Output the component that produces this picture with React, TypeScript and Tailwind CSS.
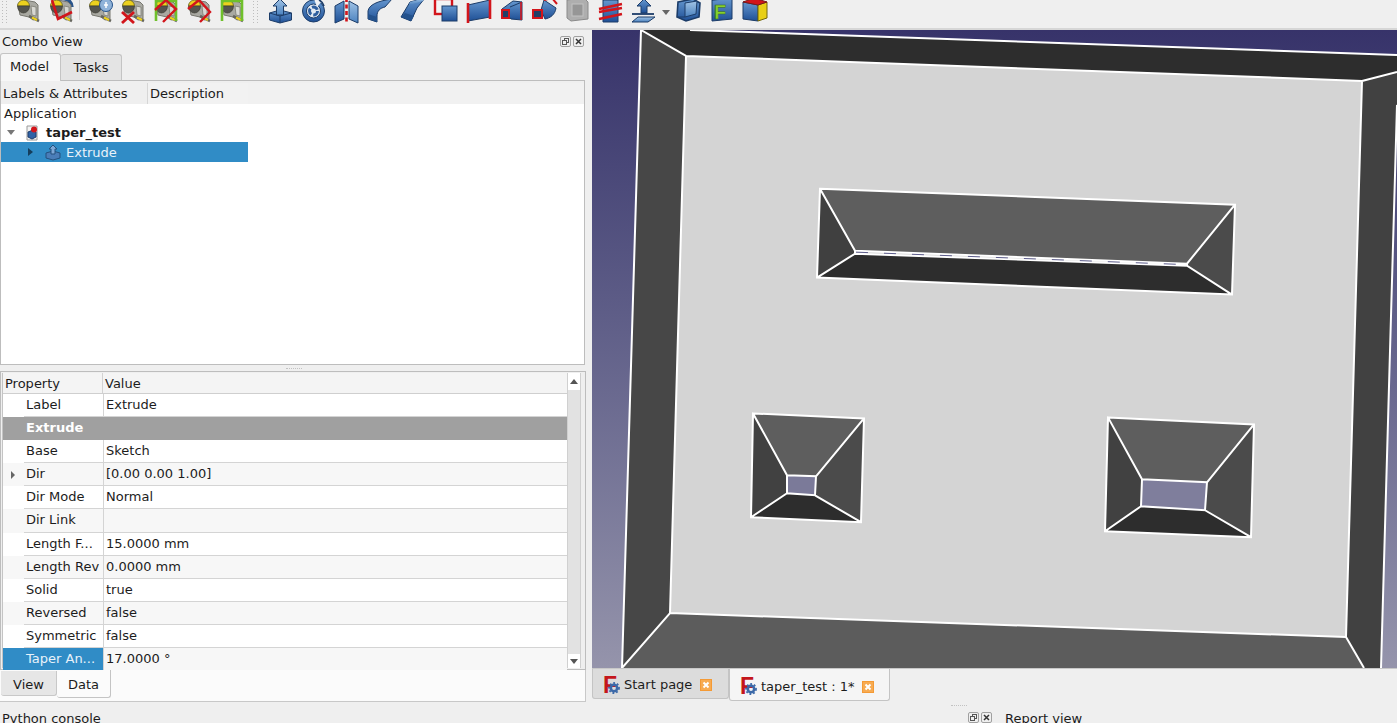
import React from "react";

const O = "#1c3c68";
const B = "url(#gb)";
const L = "url(#gl)";
const D = "#24528c";

function Ico({ children, w = 33 }: { children: React.ReactNode; w?: number }) {
  return (
    <svg width={w} height={32} viewBox={`0 0 ${w} 32`} className="shrink-0 block">
      {children}
    </svg>
  );
}

function Caliper() {
  return (
    <g>
      <path d="M7 12 L13 8 L24 10 L27 13 L27 27 L22 28 L18 25 L9 23 Z" fill="#a9a9a2" stroke="#77776f" strokeWidth="1" />
      <path d="M20 14 L25 15 L25 24 L21 23 Z" fill="#d8d8d2" stroke="#7c7c74" strokeWidth="0.8" />
      <path d="M6.5 14 A6 6 0 0 1 18.5 14 Z" fill="#ecd01e" stroke="#6a6420" strokeWidth="0.8" />
      <path d="M6.5 14 H18.5 A6 7 0 0 1 6.5 14 Z" fill="#54544e" stroke="#38382f" strokeWidth="0.6" />
      <path d="M18 24 L28 29" stroke="#66665e" strokeWidth="2.6" />
      <path d="M21 25.5 L26 28" stroke="#ecd01e" strokeWidth="2" />
    </g>
  );
}

const red = "#d2151b";
const green = "#6fc02b";

function GreenBracket() {
  return <path d="M7 29 V9 H27 V29" fill="none" stroke={green} strokeWidth="2.6" />;
}

const toolbarA = [
  <Ico key="a1"><Caliper /></Ico>,
  <Ico key="a2">
    <path d="M12 10 A9 9 0 0 1 28 15" fill="none" stroke="#2a558c" strokeWidth="3.4" />
    <Caliper />
    <path d="M8 8 L14 27 L28 20" fill="none" stroke={red} strokeWidth="2.6" />
  </Ico>,
  <Ico key="a3">
    <Caliper />
    <circle cx="23" cy="13" r="6.5" fill="#8fb2d8" stroke={D} />
    <path d="M21 13 h4 M23 10 v6" stroke="#fff" strokeWidth="1.5" />
  </Ico>,
  <Ico key="a4">
    <Caliper />
    <path d="M6 20 L18 31 M18 20 L6 31" stroke={red} strokeWidth="2.8" />
  </Ico>,
  <Ico key="a5">
    <Caliper />
    <GreenBracket />
    <path d="M6 18 L17 8 L27 17 L14 30" fill="none" stroke={red} strokeWidth="2.4" />
  </Ico>,
  <Ico key="a6">
    <Caliper />
    <path d="M6 17 L17 8 L28 20 L18 30" fill="none" stroke={red} strokeWidth="2.4" />
  </Ico>,
  <Ico key="a7">
    <Caliper />
    <GreenBracket />
  </Ico>,
];

const toolbarB = [
  <Ico key="b1">
    <path d="M5.5 21 L16 18 L27.5 21 V28 L16 31 L5.5 28 Z" fill={B} stroke={O} />
    <path d="M5.5 21 L16 24 L27.5 21 M16 24 V31" fill="none" stroke={O} />
    <path d="M16 7 L23 14 H19.5 V23 H12.5 V14 H9 Z" fill={L} stroke={O} />
  </Ico>,
  <Ico key="b2">
    <circle cx="16.5" cy="19" r="11" fill={B} stroke={O} />
    <circle cx="16.5" cy="19" r="7" fill="#e3eaf2" stroke={O} />
    <circle cx="16.5" cy="19" r="4" fill="none" stroke="#2f5f9f" strokeWidth="3" strokeDasharray="6.4 2" />
    <path d="M17 7 L20 15 L25 9 Z" fill="#eef1f5" />
    <path d="M22 8 A9 9 0 0 1 27 14" fill="none" stroke={O} strokeWidth="1.6" />
  </Ico>,
  <Ico key="b3">
    <path d="M5 14 L14 9 V27 L5 31 Z" fill={B} stroke={O} />
    <path d="M28 14 L19 9 V27 L28 31 Z" fill={L} stroke={O} />
    <path d="M16.5 6 V32" stroke={red} strokeWidth="2.6" strokeDasharray="4 2.5" />
  </Ico>,
  <Ico key="b4">
    <path d="M5 19 C6 13 14 9 29 7 L22 15 C17 16 14 19 14 24 L14 30 L5 27 Z" fill={B} stroke={O} />
    <path d="M5 22 L14 25 L14 30 L5 27 Z" fill={D} />
  </Ico>,
  <Ico key="b5">
    <path d="M14 10 L29 6 L21 16 L15 29 L5 25 Z" fill={B} stroke={O} />
    <path d="M5 25 L9 21 L18 24 L15 29 Z" fill={D} />
    <path d="M14 10 L29 6 L27 9 L13 13 Z" fill={L} />
  </Ico>,
  <Ico key="b6">
    <rect x="6" y="7" width="17" height="15" fill="#f4f4f4" stroke={red} strokeWidth="2.4" />
    <rect x="13" y="14" width="15" height="15" fill={B} stroke={O} />
  </Ico>,
  <Ico key="b7">
    <path d="M6 13 L28 8 V25 L6 29 Z" fill={B} stroke={O} />
    <path d="M6 11 V31" stroke={red} strokeWidth="2.6" />
    <path d="M28 6 V27" stroke={red} strokeWidth="2.6" />
  </Ico>,
  <Ico key="b8">
    <path d="M7 17 L18 9 L27 10 V28 L16 27 Z" fill={B} stroke={O} />
    <path d="M15 15 L27 10" stroke={O} />
    <rect x="7" y="18" width="7" height="8" fill="#213f66" stroke={red} strokeWidth="2" />
    <path d="M26 10 V28" stroke={red} strokeWidth="1.6" />
  </Ico>,
  <Ico key="b9">
    <path d="M16 8 L28 16 C27 23 22 26 17 27 L13 18 Z" fill={B} stroke={O} />
    <path d="M16 8 L24 6 L29 12" fill="none" stroke={red} strokeWidth="2" />
    <rect x="5" y="18" width="9" height="8" fill="#213f66" stroke={red} strokeWidth="2" />
  </Ico>,
  <Ico key="b10">
    <path d="M6 8 L23 6 L27 10 V27 L10 29 L6 26 Z" fill="#aeaeae" stroke="#8a8a8a" />
    <rect x="11" y="12" width="11" height="12" fill="#969696" stroke="#c2c2c2" />
  </Ico>,
  <Ico key="b11">
    <path d="M9 8 H24 V30 H9 Z" fill={B} stroke={O} />
    <path d="M9 8 L16 5 L24 8" fill={L} stroke={O} />
    <path d="M5 17 L28 12 M5 20 L28 16 M5 27 L28 22" stroke={red} strokeWidth="2.6" />
  </Ico>,
  <Ico key="b12">
    <path d="M17 7 L24 14 H20 V21 H14 V14 H10 Z" fill={B} stroke={O} />
    <path d="M5 22 L27 22" stroke={O} strokeWidth="1.8" />
    <path d="M11 25 H28 L21 30 H5 Z" fill={L} stroke={O} />
  </Ico>,
];

const toolbarC = [
  <Ico key="c1">
    <path d="M6 10 L21 7 L28 11 L27 25 L14 29 L5 25 Z" fill={B} stroke={O} strokeWidth="1.6" />
    <path d="M13 11 L25 9 L24 22 L13 25 Z" fill={L} stroke={O} />
    <path d="M6 25 L13 25" stroke={O} />
  </Ico>,
  <Ico key="c2">
    <path d="M7 8 L27 6 V27 L7 29 Z" fill={B} stroke={O} />
    <path d="M7 8 L13 5 H27 L21 7 Z" fill={D} stroke={O} />
    <text x="9" y="27" fontFamily="'Liberation Sans', sans-serif" fontWeight="700" fontSize="20" fill="#86d12e" stroke="#356c12" strokeWidth="0.6">F</text>
  </Ico>,
  <Ico key="c3">
    <path d="M5 10 L20 13 V29 L5 27 Z" fill={B} stroke={O} />
    <path d="M20 13 L29 10 V26 L20 29 Z" fill="#e8cf14" stroke="#72660a" />
    <path d="M5 10 L16 6 L29 10 L20 13 Z" fill={red} stroke="#7a1a1a" />
  </Ico>,
];

function Handle() {
  return (
    <div className="w-[6px] h-[22px] shrink-0 grid grid-cols-2 gap-[2px] content-start pt-[1px]">
      {Array.from({ length: 16 }).map((_, i) => (
        <span key={i} className="w-[1px] h-[1px] bg-[#bdbdbd]" />
      ))}
    </div>
  );
}

function FreeCADLogo() {
  return (
    <div className="relative w-[16px] h-[17px] shrink-0 leading-[17px] text-[23px] font-bold text-[#c4161c] font-['Liberation_Sans',sans-serif]">
      F
      <svg width="12" height="12" viewBox="0 0 12 12" className="absolute right-[-1px] bottom-[0px]">
        <circle cx="6" cy="6" r="3.2" fill="none" stroke="#3c69a8" strokeWidth="2.6" />
        <circle cx="6" cy="6" r="5" fill="none" stroke="#3c69a8" strokeWidth="1.8" strokeDasharray="1.8 1.9" />
      </svg>
    </div>
  );
}

function TabClose() {
  return (
    <svg width="12" height="12" viewBox="0 0 12 12" className="shrink-0 block">
      <rect width="12" height="12" fill="#f49a35" />
      <rect x="1" y="1" width="10" height="10" fill="#f7ab52" />
      <path d="M3.5 3.5 L8.5 8.5 M8.5 3.5 L3.5 8.5" stroke="#fff" strokeWidth="2" />
    </svg>
  );
}

function DockButtons() {
  return (
    <div className="flex gap-[2px] items-center">
      <svg width="11" height="11" viewBox="0 0 11 11">
        <rect x="0.5" y="0.5" width="10" height="10" rx="1.5" fill="#efefef" stroke="#a0a0a0" />
        <rect x="4.5" y="2.5" width="4" height="4" fill="none" stroke="#555" />
        <rect x="2.5" y="4.5" width="4" height="4" fill="#efefef" stroke="#555" />
      </svg>
      <svg width="11" height="11" viewBox="0 0 11 11">
        <rect x="0.5" y="0.5" width="10" height="10" rx="1.5" fill="#efefef" stroke="#a0a0a0" />
        <path d="M3 3 L8 8 M8 3 L3 8" stroke="#333" strokeWidth="1.5" />
      </svg>
    </div>
  );
}

type Row = { name: string; value: string; alt?: boolean; arrow?: boolean; sel?: boolean };
const rows: Row[] = [
  { name: "Base", value: "Sketch" },
  { name: "Dir", value: "[0.00 0.00 1.00]", alt: true, arrow: true },
  { name: "Dir Mode", value: "Normal" },
  { name: "Dir Link", value: "", alt: true },
  { name: "Length F...", value: "15.0000 mm" },
  { name: "Length Rev", value: "0.0000 mm", alt: true },
  { name: "Solid", value: "true" },
  { name: "Reversed", value: "false", alt: true },
  { name: "Symmetric", value: "false" },
  { name: "Taper An...", value: "17.0000 °", alt: true, sel: true },
];

function PropRow({ r }: { r: Row }) {
  const bg = r.alt ? "bg-[#f7f7f7]" : "bg-white";
  return (
    <div className={`flex h-[23.1px] shrink-0 ${bg}`}>
      <div className={`w-[100px] shrink-0 flex ${r.sel ? "bg-[#308cc6] text-[#e8f2fa]" : ""}`}>
        <div className="w-[21px] shrink-0 flex items-center justify-center pr-[1px]">
          {r.arrow && <span className="w-0 h-0 border-y-[4px] border-y-transparent border-l-[4px] border-l-[#666]" />}
        </div>
        <div className={`flex-1 pl-[2px] leading-[22px] whitespace-nowrap ${r.sel ? "" : "border-b border-[#d4d4d4]"}`}>{r.name}</div>
      </div>
      <div className="flex-1 border-l border-b border-[#d4d4d4] pl-[2px] leading-[22px]">{r.value}</div>
    </div>
  );
}

function Viewport() {
  return (
    <svg viewBox="592 30 805 639" className="w-full h-full block" preserveAspectRatio="none">
      <polygon points="641,30 686,56 670,614 622,669" fill="#474747" />
      <polygon points="641,30 690,30 1397,55 1397,72 1362,81 686,56" fill="#2d2d2d" />
      <polygon points="1397,72 1397,105 1381,669 1364,669 1346,638 1362,81" fill="#414141" />
      <polygon points="670,614 1346,638 1364,669 622,669" fill="#5c5c5c" />
      <polygon points="686,56 1362,81 1346,638 670,614" fill="#d4d4d4" />
      <path d="M641 30 L686 56 M641 30 L622 669 M622 669 L670 614 M686 56 L1362 81 M1362 81 L1397 72 M1362 81 L1346 638 M670 614 L1346 638 M686 56 L670 614 M1346 638 L1364 669 M1397 105 L1381 669 M690 30 L1397 55" fill="none" stroke="#fff" strokeWidth="2" />

      <polygon points="820,189 1235,205 1187,264 855,251" fill="#5e5e5e" />
      <polygon points="820,189 855,251 855,254 817,278" fill="#404040" />
      <polygon points="1235,205 1232,295 1187,266 1187,264" fill="#4b4b4b" />
      <polygon points="817,278 855,254 1187,266 1232,295" fill="#2d2d2d" />
      <path d="M820 189 L1235 205 L1232 295 L817 278 Z M820 189 L855 251 L1187 264 L1235 205 M817 278 L855 254 L1187 266 L1232 295 M855 251 V254 M1187 264 V266" fill="none" stroke="#fff" strokeWidth="2" />
      <path d="M856 252.5 L1186 265" stroke="#5c5c8c" strokeWidth="1" fill="none" strokeDasharray="12 16" />

      <polygon points="753,414 864,419 816,477 787,476" fill="#5e5e5e" />
      <polygon points="753,414 787,476 787,494 751,518" fill="#414141" />
      <polygon points="864,419 861,523 815,496 816,477" fill="#4b4b4b" />
      <polygon points="751,518 787,494 815,496 861,523" fill="#2d2d2d" />
      <polygon points="787,476 816,477 815,496 787,494" fill="#7b7a99" />
      <path d="M753 414 L864 419 L861 523 L751 518 Z M787 476 L816 477 L815 496 L787 494 Z M753 414 L787 476 M864 419 L816 477 M751 518 L787 494 M861 523 L815 496" fill="none" stroke="#fff" strokeWidth="2" />

      <polygon points="1108,418 1254,425 1207,483 1142,480" fill="#5e5e5e" />
      <polygon points="1108,418 1142,480 1141,507 1105,532" fill="#414141" />
      <polygon points="1254,425 1251,538 1205,511 1207,483" fill="#4b4b4b" />
      <polygon points="1105,532 1141,507 1205,511 1251,538" fill="#2d2d2d" />
      <polygon points="1142,480 1207,483 1205,511 1141,507" fill="#7f7e9c" />
      <path d="M1108 418 L1254 425 L1251 538 L1105 532 Z M1142 480 L1207 483 L1205 511 L1141 507 Z M1108 418 L1142 480 M1254 425 L1207 483 M1105 532 L1141 507 M1251 538 L1205 511" fill="none" stroke="#fff" strokeWidth="2" />
    </svg>
  );
}

export default function App() {
  return (
    <div className="w-[1397px] h-[723px] overflow-hidden flex flex-col bg-[#efefef] text-[13px] text-[#1c1c1c] font-['DejaVu_Sans',sans-serif]">
      {/* toolbar */}
      <div className="h-[28px] shrink-0 flex items-end overflow-hidden pb-[4px]">
        <svg width="0" height="0" className="shrink-0">
          <defs>
            <linearGradient id="gb" x1="0" y1="0" x2="0" y2="1">
              <stop offset="0" stopColor="#6597cf" />
              <stop offset="1" stopColor="#1f5096" />
            </linearGradient>
            <linearGradient id="gl" x1="0" y1="0" x2="0" y2="1">
              <stop offset="0" stopColor="#a2c4e6" />
              <stop offset="1" stopColor="#4b82bf" />
            </linearGradient>
          </defs>
        </svg>
        <div className="w-[10.5px] shrink-0 flex justify-center self-start"><Handle /></div>
        {toolbarA.slice(0, 2)}
        <div className="w-[6px] shrink-0 self-start flex justify-center"><span className="w-[1px] h-[20px] bg-[#cfcfcf]" /></div>
        {toolbarA.slice(2)}
        <div className="w-[16px] shrink-0 self-start flex justify-center"><Handle /></div>
        {toolbarB}
        <div className="w-[12px] h-[22px] shrink-0 self-start flex items-center justify-center pt-[3px]">
          <span className="w-0 h-0 border-x-[4px] border-x-transparent border-t-[5px] border-t-[#666]" />
        </div>
        {toolbarC}
      </div>
      <div className="h-[2px] shrink-0 bg-[#d6d6d6]" />

      {/* main */}
      <div className="h-[672px] shrink-0 flex">
        {/* left column */}
        <div className="w-[586px] shrink-0 flex flex-col">
          <div className="h-[23px] shrink-0 flex items-center justify-between pl-[2px] pr-[2px]">
            <span>Combo View</span>
            <DockButtons />
          </div>
          <div className="h-[27px] shrink-0 flex items-end relative">
            <div className="w-[61px] h-[28px] bg-[#f7f7f7] border border-b-0 border-[#c4c4c4] rounded-t-[3px] flex items-center justify-center pr-[2px] pb-[2px] relative top-[1px] z-10">Model</div>
            <div className="w-[61px] h-[26px] bg-[#e4e4e4] border border-b-0 border-l-0 border-[#c4c4c4] rounded-t-[3px] flex items-center justify-center">Tasks</div>
          </div>
          <div className="h-[285px] shrink-0 w-[585px] bg-white border border-[#bdbdbd] flex flex-col">
            <div className="h-[23px] shrink-0 bg-[#efefef] flex pt-[2px]">
              <div className="w-[147px] shrink-0 pl-[2px] leading-[21px] border-r border-[#d6d6d6]">Labels &amp; Attributes</div>
              <div className="w-[100px] shrink-0 pl-[2px] leading-[21px] bg-[#f2f2f2]">Description</div>
              <div className="flex-1 bg-[#f1f1f1]" />
            </div>
            <div className="h-[19px] shrink-0 pl-[3px] leading-[19px]">Application</div>
            <div className="h-[19px] shrink-0 flex items-center">
              <span className="w-0 h-0 ml-[6px] border-x-[4px] border-x-transparent border-t-[5px] border-t-[#777]" />
              <svg width="16" height="16" viewBox="0 0 16 16" className="ml-[9px] shrink-0">
                <path d="M3 1 H13 V15 H3 Z" fill="#f4f4f4" stroke="#9a9a9a" />
                <path d="M4 7 L9 5 L12 7 V12 L8 14 L4 12 Z" fill="#2f62a6" stroke="#1e3d6b" />
                <circle cx="10" cy="4.5" r="3" fill="#d3161c" />
              </svg>
              <span className="ml-[6px] font-bold">taper_test</span>
            </div>
            <div className="h-[20px] shrink-0 w-[247px] bg-[#308cc6] text-white flex items-center">
              <span className="w-0 h-0 ml-[27px] border-y-[4px] border-y-transparent border-l-[5px] border-l-[#153e5c]" />
              <svg width="18" height="18" viewBox="0 0 18 18" className="ml-[11px] shrink-0">
                <path d="M2 10 L9 8 L16 10 V15 L9 17 L2 15 Z" fill="#4a7db8" stroke="#24517f" />
                <path d="M9 2 L13 6 H11 V11 H7 V6 H5 Z" fill="#7ca7d6" stroke="#24517f" />
              </svg>
              <span className="ml-[4px] pt-[1px] text-[#e8f2fa]">Extrude</span>
            </div>
          </div>
          <div className="h-[6px] shrink-0 flex justify-end pr-[284px] items-center">
            <span className="w-[16px] border-t border-dotted border-[#c2c2c2]" />
          </div>
          <div className="h-[299px] shrink-0 border border-[#bdbdbd] bg-[#efefef] flex p-[1px]">
            <div className="w-[565px] shrink-0 flex flex-col bg-white border-l border-[#c4c4c4]">
              <div className="h-[21px] shrink-0 bg-[#f4f4f4] flex border-b border-[#cfcfcf]">
                <div className="w-[100px] shrink-0 pl-[2px] pt-[1px] leading-[20px] border-r border-[#d2d2d2]">Property</div>
                <div className="pl-[2px] pt-[1px] leading-[20px]">Value</div>
              </div>
              <div className="flex h-[23.1px] shrink-0 bg-white">
                <div className="w-[21px] shrink-0" />
                <div className="w-[79px] shrink-0 pl-[2px] leading-[22px] border-b border-[#d4d4d4]">Label</div>
                <div className="flex-1 border-l border-b border-[#d4d4d4] pl-[2px] leading-[22px]">Extrude</div>
              </div>
              <div className="h-[23.1px] shrink-0 bg-[#a0a0a0] text-white font-bold pl-[23px] leading-[22px]">Extrude</div>
              {rows.map((r) => (
                <PropRow key={r.name} r={r} />
              ))}
            </div>
            <div className="w-[14px] shrink-0 flex flex-col bg-[#f0f0f0] border-x border-[#d0d0d0]">
              <div className="h-[17px] shrink-0 bg-white flex items-center justify-center">
                <span className="w-0 h-0 border-x-[4px] border-x-transparent border-b-[5px] border-b-[#555]" />
              </div>
              <div className="flex-1 bg-[#e2e2e2]" />
              <div className="h-[14px] shrink-0 bg-white flex items-center justify-center">
                <span className="w-0 h-0 border-x-[4px] border-x-transparent border-t-[5px] border-t-[#555]" />
              </div>
            </div>
          </div>
          <div className="flex-1 flex items-start bg-[#fbfbfb] border-x border-b border-[#c8c8c8] -ml-[1px]">
            <div className="w-[56px] h-[25px] mt-[1px] ml-[1px] bg-[#e6e6e6] border-r border-b border-[#c8c8c8] rounded-b-[3px] flex items-center justify-center pt-[3px]">View</div>
            <div className="w-[54px] h-[28px] bg-[#fbfbfb] border-r border-b border-[#c4c4c4] rounded-b-[3px] flex items-center justify-center pt-[3px]">Data</div>
          </div>
        </div>

        {/* gap */}
        <div className="w-[6px] shrink-0" />

        {/* right column */}
        <div className="flex-1 flex flex-col">
          <div className="h-[639px] shrink-0 bg-gradient-to-b from-[#37336a] to-[#9594ab] border-b border-[#c8c8c8]">
            <Viewport />
          </div>
          <div className="flex-1 flex items-start">
            <div className="w-[137px] h-[30px] bg-[#dcdcdc] border border-t-0 border-[#c4c4c4] rounded-b-[3px] flex items-center pl-[10px] pt-[3px] gap-[5px]">
              <FreeCADLogo />
              <span>Start page</span>
              <span className="ml-[3px]"><TabClose /></span>
            </div>
            <div className="w-[161px] h-[32px] bg-[#f5f5f5] border border-t-0 border-[#c4c4c4] rounded-b-[3px] flex items-center pl-[10px] pt-[4px] gap-[5px]">
              <FreeCADLogo />
              <span>taper_test : 1*</span>
              <span className="ml-[2px]"><TabClose /></span>
            </div>
          </div>
        </div>
      </div>

      {/* bottom */}
      <div className="flex-1 flex relative">
        <div className="pl-[2px] pt-[8px] leading-[18px] whitespace-nowrap">Python console</div>
        <div className="ml-auto w-[429px] shrink-0 flex flex-col">
          <div className="h-[4px] flex -ml-[17px]">
            <span className="w-[16px] mt-[3px] border-t border-dotted border-[#c2c2c2]" />
          </div>
          <div className="flex items-start pt-[4px]">
            <div className="mt-[2px]"><DockButtons /></div>
            <span className="ml-[13px] leading-[18px]">Report view</span>
          </div>
        </div>
      </div>
    </div>
  );
}
